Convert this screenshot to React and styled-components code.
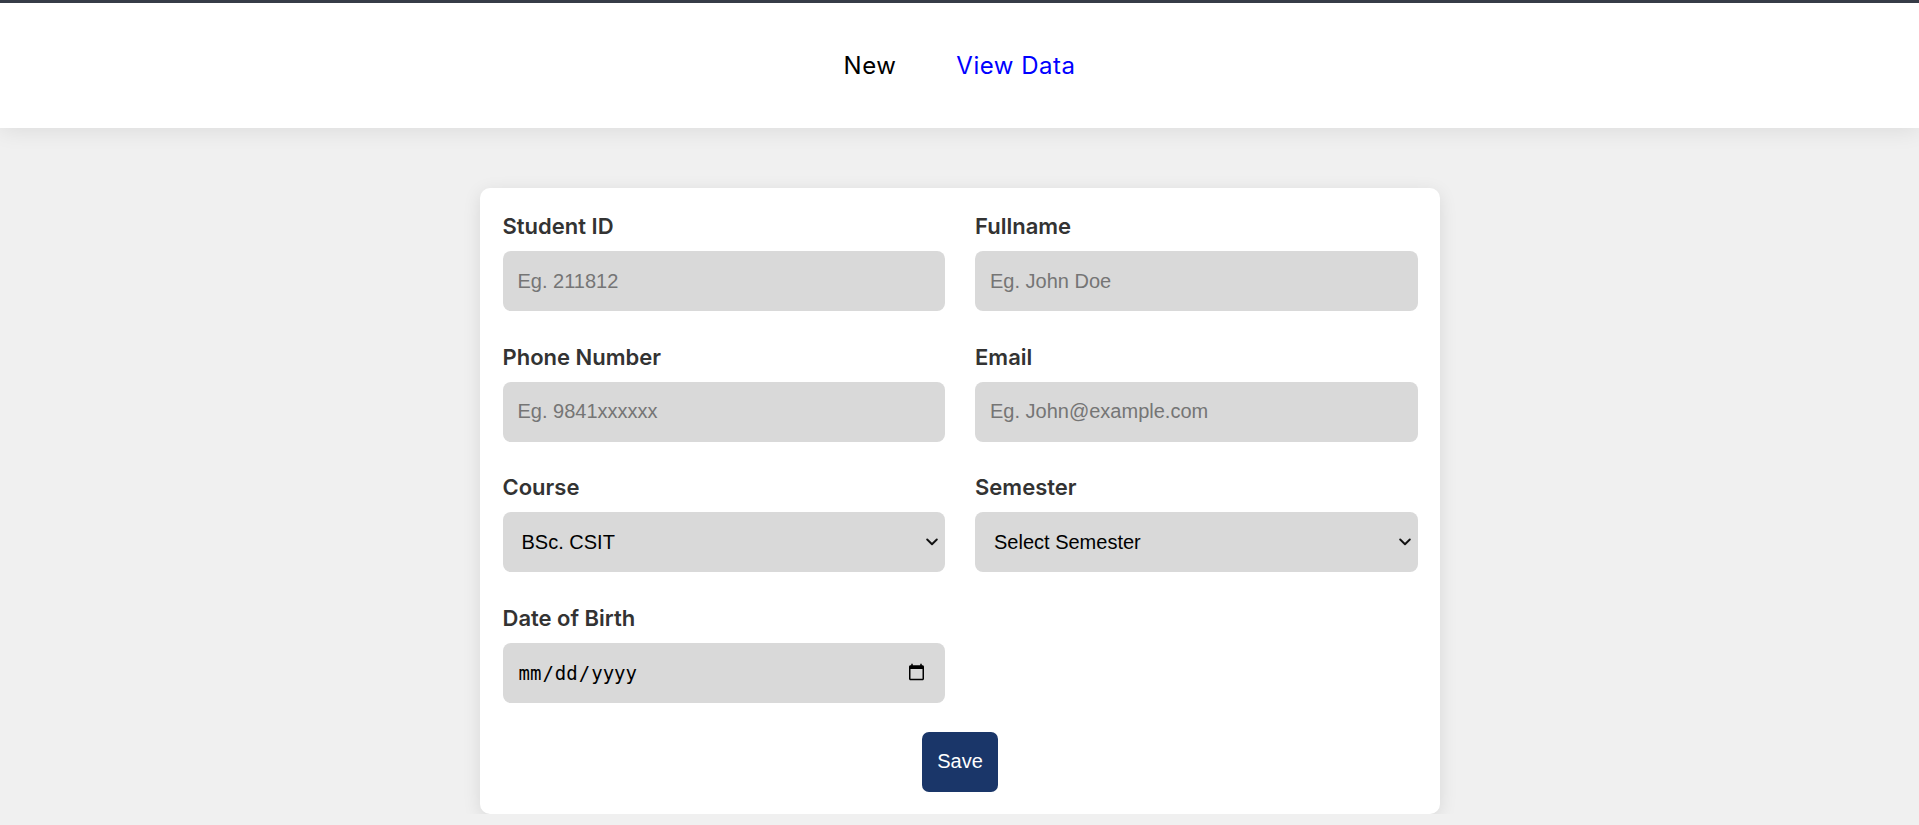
import styled, { createGlobalStyle } from 'styled-components'

const GlobalStyle = createGlobalStyle`
  html, body {
    margin: 0;
    padding: 0;
    background: #f0f0f0;
    font-family: Inter, "Noto Sans", sans-serif;
  }
  * {
    box-sizing: border-box;
  }
`

const fields = [
  { id: 'studentId', label: 'Student ID', type: 'text', placeholder: 'Eg. 211812' },
  { id: 'fullname', label: 'Fullname', type: 'text', placeholder: 'Eg. John Doe' },
  { id: 'phone', label: 'Phone Number', type: 'text', placeholder: 'Eg. 9841xxxxxx' },
  { id: 'email', label: 'Email', type: 'email', placeholder: 'Eg. John@example.com' },
]

const courses = ['BSc. CSIT', 'BCA', 'BIM', 'BBA']
const semesters = ['Select Semester', '1st', '2nd', '3rd', '4th', '5th', '6th', '7th', '8th']

const Chevron = () => (
  <ChevronIcon width="12" height="8" viewBox="0 0 12 8" aria-hidden="true">
    <path d="M1.2 1.5 6 6.2l4.8-4.7" fill="none" stroke="#111" strokeWidth="1.9" strokeLinecap="round" strokeLinejoin="round" />
  </ChevronIcon>
)

export default function App() {
  return (
    <>
      <GlobalStyle />
      <Header>
        <Nav>
          <NavLink href="#" $active>New</NavLink>
          <NavLink href="#">View Data</NavLink>
        </Nav>
      </Header>
      <Main>
        <Card onSubmit={e => e.preventDefault()}>
          <FieldGrid>
            {fields.map(f => (
              <Field key={f.id}>
                <Label htmlFor={f.id}>{f.label}</Label>
                <Input id={f.id} type={f.type} placeholder={f.placeholder} />
              </Field>
            ))}
            <Field>
              <Label htmlFor="course">Course</Label>
              <SelectWrap>
                <Select id="course" defaultValue="BSc. CSIT">
                  {courses.map(c => <option key={c}>{c}</option>)}
                </Select>
                <Chevron />
              </SelectWrap>
            </Field>
            <Field>
              <Label htmlFor="semester">Semester</Label>
              <SelectWrap>
                <Select id="semester" defaultValue="Select Semester">
                  {semesters.map(s => <option key={s}>{s}</option>)}
                </Select>
                <Chevron />
              </SelectWrap>
            </Field>
            <Field>
              <Label htmlFor="dob">Date of Birth</Label>
              <DateInput id="dob" type="date" />
            </Field>
          </FieldGrid>
          <Actions>
            <SaveButton type="submit">Save</SaveButton>
          </Actions>
        </Card>
      </Main>
    </>
  )
}

const Header = styled.header`
  height: 128px;
  background: #fff;
  border-top: 3px solid #363c47;
  box-shadow: 0 2px 22px rgba(0, 0, 0, 0.09);
  display: flex;
  align-items: center;
  justify-content: center;
  position: relative;
`
const Nav = styled.nav`
  display: flex;
  gap: 60px;
`
const NavLink = styled.a`
  font-size: 24px;
  font-weight: 400;
  letter-spacing: 0.5px;
  text-decoration: none;
  color: ${p => (p.$active ? '#000' : '#0000ff')};
`
const Main = styled.main`
  padding-top: 60px;
`
const Card = styled.form`
  width: 960px;
  margin: 0 auto;
  background: #fff;
  border-radius: 10px;
  padding: 22px 22px 22px 23px;
  box-shadow: 0 4px 18px rgba(0, 0, 0, 0.1);
`
const FieldGrid = styled.div`
  display: grid;
  grid-template-columns: 1fr 1fr;
  column-gap: 30px;
  row-gap: 29.5px;
`
const Field = styled.div`
  display: flex;
  flex-direction: column;
  gap: 8px;
`
const Label = styled.label`
  font-size: 22px;
  line-height: 33px;
  font-weight: 600;
  color: #333;
`
const Input = styled.input`
  height: 60px;
  border: none;
  outline: none;
  border-radius: 8px;
  background: #d9d9d9;
  padding: 0 15px;
  font-family: "Liberation Sans", Arial, sans-serif;
  font-size: 20px;
  color: #000;
  &::placeholder {
    color: #757575;
  }
`
const DateInput = styled(Input)`
  font-family: "DejaVu Sans Mono", "Liberation Mono", monospace;
  font-size: 19px;
  padding-right: 17px;
`
const SelectWrap = styled.div`
  position: relative;
  display: flex;
`
const Select = styled.select`
  flex: 1;
  height: 60px;
  border: none;
  outline: none;
  border-radius: 8px;
  background: #d9d9d9;
  padding: 0 30px 0 19px;
  appearance: none;
  font-family: "Liberation Sans", Arial, sans-serif;
  font-size: 20px;
  color: #000;
`
const ChevronIcon = styled.svg`
  position: absolute;
  right: 7px;
  top: 50%;
  transform: translateY(-50%);
  pointer-events: none;
`
const Actions = styled.div`
  display: flex;
  justify-content: center;
  margin-top: 29px;
`
const SaveButton = styled.button`
  height: 60px;
  padding: 0 15px;
  border: none;
  border-radius: 7px;
  background: #1a3669;
  color: #fff;
  font-family: "Liberation Sans", Arial, sans-serif;
  font-size: 20px;
  cursor: pointer;
`
